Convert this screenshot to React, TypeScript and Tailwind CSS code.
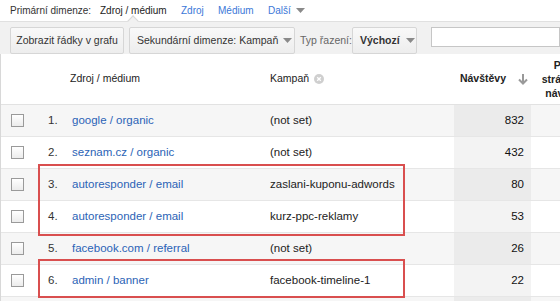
const rows = [
  { n: 1, src: "google / organic", camp: "(not set)", v: 832 },
  { n: 2, src: "seznam.cz / organic", camp: "(not set)", v: 432 },
  { n: 3, src: "autoresponder / email", camp: "zaslani-kuponu-adwords", v: 80 },
  { n: 4, src: "autoresponder / email", camp: "kurz-ppc-reklamy", v: 53 },
  { n: 5, src: "facebook.com / referral", camp: "(not set)", v: 26 },
  { n: 6, src: "admin / banner", camp: "facebook-timeline-1", v: 22 },
  { n: 7, src: "", camp: "", v: null },
];

const Caret = () => (
  <svg width="9" height="5" viewBox="0 0 9 5" className="ml-[5px] shrink-0">
    <path d="M0 0h9L4.5 5z" fill="#8a8a8a" />
  </svg>
);

const Checkbox = () => (
  <span className="block h-[13px] w-[13px] border border-[#9a9a9a] bg-gradient-to-b from-white to-[#ececec]" />
);

export default function App() {
  return (
    <div className="relative h-[301px] w-[560px] overflow-hidden bg-white font-['Liberation_Sans',Arial,sans-serif] text-[#333]">
      {/* primary dimension line */}
      <div className="flex h-[21px] items-center whitespace-nowrap pl-[10px] text-[10px]">
        <span className="w-[90px] shrink-0 text-[#333]">Primární dimenze:</span>
        <span className="w-[81px] shrink-0 text-[#222]">Zdroj / médium</span>
        <span className="w-[37px] shrink-0 text-[#3b78d8]">Zdroj</span>
        <span className="w-[50px] shrink-0 text-[#3b78d8]">Médium</span>
        <span className="flex items-center text-[#3b78d8]">
          Další
          <Caret />
        </span>
      </div>
      <span className="absolute left-[129px] top-[17px] h-[8px] w-[8px] rotate-45 border-l border-t border-[#d8d8d8] bg-[#f1f1f1]" />

      {/* toolbar */}
      <div className="flex h-[33px] items-end whitespace-nowrap border-t border-[#e0e0e0] bg-[#f1f1f1] pl-[10px] text-[10.5px]">
        <button className="flex h-[27px] w-[114px] shrink-0 items-center justify-center rounded-[2px] border border-[#d6d6d6] bg-gradient-to-b from-[#f9f9f9] to-[#ededed] text-[#333]">
          Zobrazit řádky v grafu
        </button>
        <button className="ml-[5px] flex h-[27px] w-[166px] shrink-0 items-center rounded-[2px] border border-[#d6d6d6] bg-gradient-to-b from-[#f9f9f9] to-[#ededed] pl-[7px] text-[#333]">
          <span className="w-[141px] text-left">Sekundární dimenze: Kampaň</span>
          <Caret />
        </button>
        <span className="ml-[5px] flex h-[27px] w-[52px] shrink-0 items-center text-[#666]">Typ řazení:</span>
        <button className="flex h-[27px] w-[65px] shrink-0 items-center rounded-[2px] border border-[#d6d6d6] bg-gradient-to-b from-[#f9f9f9] to-[#ededed] pl-[7px] font-bold text-[#333]">
          <span className="w-[41px] text-left">Výchozí</span>
          <Caret />
        </button>
        <div className="mb-[7px] ml-[14px] h-[20px] flex-1 border border-[#c6c6c6] bg-white" />
      </div>

      {/* table */}
      <div className="border-l border-[#d8d8d8] text-[11.5px]">
        <div className="flex h-[51px] items-center border-b border-[#e2e2e2] bg-white text-[10.5px] text-[#222]">
          <div className="w-[69px] shrink-0" />
          <div className="w-[200px] shrink-0">Zdroj / médium</div>
          <div className="flex w-[184px] shrink-0 items-center">
            Kampaň
            <svg width="10" height="10" viewBox="0 0 10 10" className="ml-[5px]">
              <circle cx="5" cy="5" r="5" fill="#cfcfcf" />
              <path d="M3.2 3.2l3.6 3.6M6.8 3.2l-3.6 3.6" stroke="#fff" strokeWidth="1.3" />
            </svg>
          </div>
          <div className="flex w-[77px] shrink-0 items-center justify-end whitespace-nowrap pr-[3px] font-bold">
            Návštěvy
            <svg width="10" height="11" viewBox="0 0 10 11" className="ml-[12px]">
              <path d="M5 0v9M1 5.5l4 4 4-4" stroke="#999" strokeWidth="2" fill="none" />
            </svg>
          </div>
          <div className="w-[74px] shrink-0">
            <div className="mx-auto w-[60px] text-center font-bold leading-[14px]">
              Počet stránek na návštěvu
            </div>
          </div>
        </div>

        {rows.map((r) => (
          <div
            key={r.n}
            className={`flex h-[32px] items-center border-b border-[#e6e6e6] ${r.n % 2 ? "bg-[#f6f6f6]" : "bg-white"}`}
          >
            <div className="flex w-[38px] shrink-0 pl-[10px]">{r.src && <Checkbox />}</div>
            <div className="w-[33px] shrink-0 pl-[9px] text-[#333]">{r.src && `${r.n}.`}</div>
            <div className="w-[198px] shrink-0 text-[#2b63b6]">{r.src}</div>
            <div className="w-[184px] shrink-0 text-[#222]">{r.camp}</div>
            <div
              className={`flex h-full w-[77px] shrink-0 items-center justify-end pr-[7px] text-[#111] ${r.n % 2 ? "bg-[#ebebeb]" : "bg-[#f3f3f3]"}`}
            >
              {r.v}
            </div>
            <div className="flex-1" />
          </div>
        ))}
      </div>

      {/* highlight boxes */}
      <div className="absolute left-[38px] top-[164px] h-[72px] w-[367px] border-2 border-[#d94f4f]" />
      <div className="absolute left-[38px] top-[259px] h-[39px] w-[367px] border-2 border-[#d94f4f]" />
    </div>
  );
}
